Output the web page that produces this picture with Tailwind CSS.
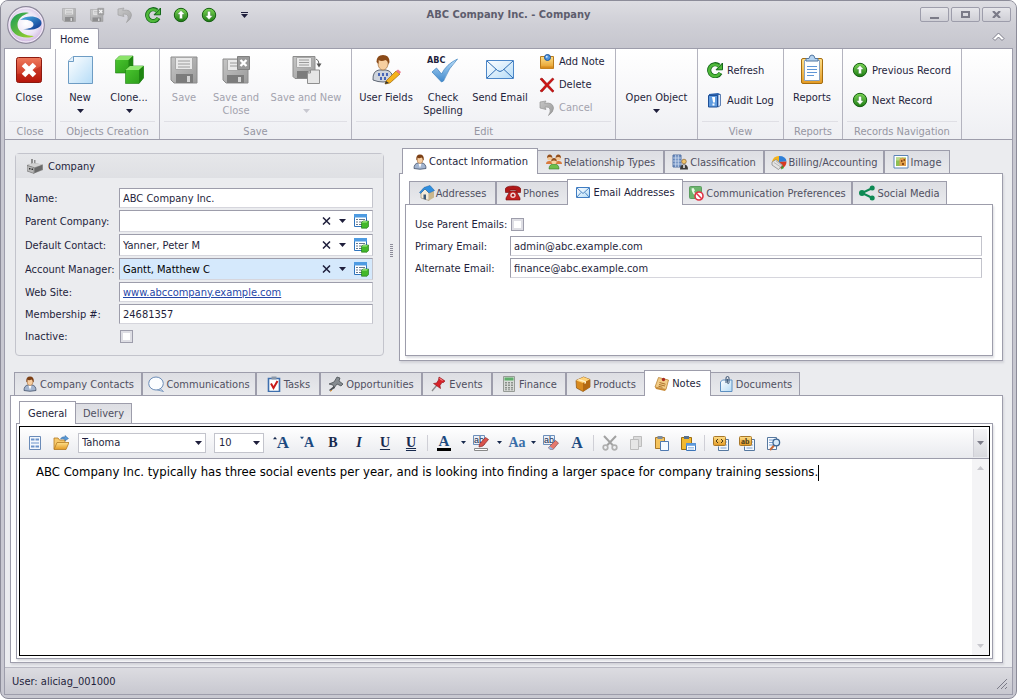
<!DOCTYPE html>
<html lang="en">
    <head>
        <meta charset="UTF-8" />
        <meta name="viewport" content="width=device-width, initial-scale=1.0" />
        <title>ABC Company Inc. - Company</title>
        <script src="https://cdn.jsdelivr.net/npm/@tailwindcss/browser@4"></script>
    </head>
    <body class="bg-white">
        <!-- icon sprite -->
        <svg class="absolute w-0 h-0" aria-hidden="true">
            <defs>
                <linearGradient id="gGreen" x1="0" y1="0" x2="0" y2="1">
                    <stop offset="0" stop-color="#7ed957" />
                    <stop offset="1" stop-color="#1c7a12" />
                </linearGradient>
                <linearGradient id="gRed" x1="0" y1="0" x2="0" y2="1">
                    <stop offset="0" stop-color="#ef7a5c" />
                    <stop offset="1" stop-color="#bf1a0e" />
                </linearGradient>
                <linearGradient id="gGray" x1="0" y1="0" x2="1" y2="1">
                    <stop offset="0" stop-color="#c6c6c6" />
                    <stop offset="1" stop-color="#9a9a9a" />
                </linearGradient>
                <linearGradient id="gBlue" x1="0" y1="0" x2="1" y2="1">
                    <stop offset="0" stop-color="#ffffff" />
                    <stop offset="1" stop-color="#b5dcf7" />
                </linearGradient>
                <linearGradient id="gSky" x1="0" y1="0" x2="0" y2="1">
                    <stop offset="0" stop-color="#b9defa" />
                    <stop offset="1" stop-color="#3f88cc" />
                </linearGradient>
                <linearGradient id="gGold" x1="0" y1="0" x2="0" y2="1">
                    <stop offset="0" stop-color="#ffe08a" />
                    <stop offset="1" stop-color="#e39a24" />
                </linearGradient>
                <linearGradient id="gCube" x1="0" y1="0" x2="1" y2="1">
                    <stop offset="0" stop-color="#4cc930" />
                    <stop offset="1" stop-color="#2a9a18" />
                </linearGradient>
                <radialGradient id="gOrb" cx="0.5" cy="0.45" r="0.55">
                    <stop offset="0" stop-color="#ffffff" />
                    <stop offset="0.6" stop-color="#ebe3f5" />
                    <stop offset="1" stop-color="#cdb2dc" />
                </radialGradient>
                <linearGradient id="gSwooshG" x1="0" y1="0" x2="1" y2="1">
                    <stop offset="0" stop-color="#149a5b" />
                    <stop offset="1" stop-color="#a6d626" />
                </linearGradient>
                <linearGradient id="gSwooshB" x1="0" y1="0" x2="1" y2="1">
                    <stop offset="0" stop-color="#4fb4e6" />
                    <stop offset="1" stop-color="#0b2f8c" />
                </linearGradient>
            </defs>

            <symbol id="i-orb" viewBox="0 0 38 38">
                <circle cx="19" cy="19" r="18.3" fill="url(#gOrb)" stroke="#8d8a9b" stroke-width="1.2" />
                <circle cx="19" cy="19" r="17" fill="none" stroke="#f6f2fa" stroke-width="1" />
                <path d="M22 7C12 5 3.500 11 3.500 19c0 7 7 12.500 16.500 12.500 3 0 5-.5 7-1.500-9 0-16.500-4.500-16.500-11C10.500 13 15 9 22 7z" fill="url(#gSwooshG)" />
                <path d="M13 14c7-6 21.500-4 21.500 3 0 5-8 8-18.500 6 6 0 10.500-1.500 10.500-4.500 0-3.500-6-5.500-13.500-4.500z" fill="url(#gSwooshB)" />
            </symbol>

            <symbol id="i-save" viewBox="0 0 32 32">
                <path d="M3 3h26v26H6l-3-3z" fill="url(#gGray)" stroke="#8c8c8c" />
                <path d="M7.500 3.500h17v12h-17z" fill="#e9e9e9" stroke="#a8a8a8" />
                <path d="M10 7h12M10 10h12M10 13h12" stroke="#9a9a9a" />
                <path d="M8 20h17v9H8z" fill="#7c7c7c" />
                <path d="M19 22h3v6h-3z" fill="#d6d6d6" />
            </symbol>
            <symbol id="i-save-close" viewBox="0 0 32 32">
                <path d="M3 5h25v24H6l-3-3z" fill="url(#gGray)" stroke="#8c8c8c" />
                <path d="M7.500 5.500h13v11h-13z" fill="#e9e9e9" stroke="#a8a8a8" />
                <path d="M10 9h9M10 12h9" stroke="#9a9a9a" />
                <path d="M7 21h17v8H7z" fill="#7c7c7c" />
                <path d="M18 23h3v5h-3z" fill="#d6d6d6" />
                <path d="M17.500 2.500h12v13h-12z" fill="#999" stroke="#808080" />
                <path d="M20.500 6l6 6M26.500 6l-6 6" stroke="#fff" stroke-width="2.400" />
            </symbol>
            <symbol id="i-save-new" viewBox="0 0 32 32">
                <path d="M3 2.500h22v22H5l-2-2z" fill="url(#gGray)" stroke="#8c8c8c" />
                <path d="M6.500 3.500h15v10h-15z" fill="#e9e9e9" stroke="#a8a8a8" />
                <path d="M9 6h10M9 8.500h10M9 11h10" stroke="#9a9a9a" />
                <path d="M7 17h11v7H7z" fill="#7c7c7c" />
                <path d="M26 5q3 1 3 5" stroke="#666" fill="none" />
                <path d="M26.500 9.500h5l-2.500 4z" fill="#555" />
                <path d="M20.500 16h9v13.500h-12V19z" fill="#e6e6e6" stroke="#8f8f8f" />
                <path d="M17.500 19h3v-3" fill="none" stroke="#8f8f8f" />
            </symbol>
            <symbol id="i-undo" viewBox="0 0 16 16">
                <path d="M1 2l6-1-1.300 2.300Q14 2 14.500 8q0 4-5 7.500 2.500-4 1.500-6.500Q10 6.500 6 7l1 2.500L1 8z" fill="url(#gGray)" stroke="#959595" stroke-width=".7" />
            </symbol>
            <symbol id="i-refresh" viewBox="0 0 16 16">
                <path d="M13.500 11A6 6 0 1 1 12 3.500" fill="none" stroke="#14691a" stroke-width="4.200" />
                <path d="M9 7.800h6.500V1z" fill="#14691a" stroke="#14691a" />
                <path d="M13 11.200A5.800 5.800 0 1 1 12 4.200" fill="none" stroke="#4fb83a" stroke-width="2.600" />
                <path d="M10.500 7.300H15V2.500z" fill="#4fb83a" />
            </symbol>
            <symbol id="i-up" viewBox="0 0 16 16">
                <circle cx="8" cy="8" r="6.700" fill="url(#gGreen)" stroke="#155d12" />
                <path d="M8 3.300l4 4.200H9.600v4.300H6.400V7.500H4z" fill="#fff" stroke="#2a7a20" stroke-width=".5" />
            </symbol>
            <symbol id="i-down" viewBox="0 0 16 16">
                <circle cx="8" cy="8" r="6.700" fill="url(#gGreen)" stroke="#155d12" />
                <path d="M8 12.700l4-4.200H9.600V4.200H6.400v4.300H4z" fill="#fff" stroke="#2a7a20" stroke-width=".5" />
            </symbol>
            <symbol id="i-caret" viewBox="0 0 7 4"><path d="M0 0h7L3.500 4z" fill="currentColor" /></symbol>

            <symbol id="i-close" viewBox="0 0 32 32">
                <rect x="3.500" y="3.500" width="25" height="25" rx="2" fill="url(#gRed)" stroke="#8c1a10" />
                <path d="M4 20q14-1 24-8v16H4z" fill="#a80f06" opacity=".35" />
                <path d="M10.500 10.500l11 11M21.500 10.500l-11 11" stroke="#fff" stroke-width="5" />
            </symbol>
            <symbol id="i-new" viewBox="0 0 32 32">
                <path d="M9 2.500h19.500v27h-24V7z" fill="url(#gBlue)" stroke="#6d9cc4" />
                <path d="M9.500 2.500v5h-5" fill="#e6f3fd" stroke="#6d9cc4" />
            </symbol>
            <symbol id="i-clone" viewBox="0 0 32 32">
                <path d="M2.500 6l4-4H20v11l-4.500 6h-13z" fill="url(#gCube)" stroke="#1c7c10" stroke-width=".6" />
                <path d="M2.500 6l4-4H20l-4.500 4z" fill="#8be36a" />
                <path d="M15.500 6L20 2v12l-4.500 5z" fill="#1f8512" />
                <path d="M12.500 16l4.500-4h13.500v12L26 29.500H12.500z" fill="url(#gCube)" stroke="#1c7c10" stroke-width=".6" />
                <path d="M12.500 16l4.500-4h13.500L26 16z" fill="#93e873" />
                <path d="M26 16l4.500-4v12L26 29.500z" fill="#1f8512" />
            </symbol>
            <symbol id="i-user-fields" viewBox="0 0 32 32">
                <path d="M3 26q-.5-9 6-10h7q7 1 7 10-10 4-20 0z" fill="#cfd4dc" stroke="#5f6774" />
                <path d="M8 19h2v3H8zM12 19h2v3h-2zM16 19h2v3h-2zM10 23h2v3h-2zM14 23h2v3h-2z" fill="#4866b8" />
                <ellipse cx="13" cy="9.500" rx="5" ry="6.500" fill="#f7cfa0" stroke="#a5713d" stroke-width=".7" />
                <path d="M6.500 8q0-7 6.500-7t6.500 7l-1 3q0-4-3-5-4 2-7 0v4z" fill="#8a4a18" />
                <path d="M16 27l10-10 4 3-10 9-5 1z" fill="#f6b21c" stroke="#a06a10" stroke-width=".7" />
                <path d="M26 17l2-1.500 3 2.500-1.500 2z" fill="#e9788a" />
                <path d="M15 30l1-3 3 2z" fill="#333" />
            </symbol>
            <symbol id="i-check" viewBox="0 0 32 32">
                <path d="M5 18l4.500-4 5 6q5-10 16-15-9 9-14 22l-2 1z" fill="url(#gSky)" stroke="#3b7fbd" stroke-width=".7" />
            </symbol>
            <symbol id="i-mail" viewBox="0 0 32 22">
                <path d="M2.500 1.500h27v18h-27z" fill="url(#gBlue)" stroke="#4b86c8" />
                <path d="M3 2l10.500 9.500q2.500 2 5 0L29 2M3 19l9-8.500M29 19l-9-8.500" fill="none" stroke="#2f6eb4" />
            </symbol>
            <symbol id="i-mail-sm" viewBox="0 0 16 12">
                <path d="M1.500.5h13v10h-13z" fill="url(#gBlue)" stroke="#3f7cc2" />
                <path d="M2 1l6 5.500L14 1M2 10l4-4.500M14 10l-4-4.500" fill="none" stroke="#2f6eb4" stroke-width=".8" />
            </symbol>
            <symbol id="i-note" viewBox="0 0 16 16">
                <path d="M1.500 2.500h13v12h-13z" fill="url(#gGold)" stroke="#b97a1c" />
                <path d="M2 12.500h12v2H2z" fill="#d88c1e" />
                <circle cx="8.500" cy="3.500" r="3" fill="#4f93dc" stroke="#1e5499" />
                <circle cx="7.700" cy="2.700" r="1" fill="#d2e8ff" />
            </symbol>
            <symbol id="i-delete" viewBox="0 0 16 16">
                <path d="M1 2l2-1 5 5.500L13.500 1 15 2.200 9.500 8 15 14l-1.500 1.200L8 9.500 3 15l-2-1 5.500-6z" fill="#d11212" stroke="#8e0c0c" stroke-width=".6" />
            </symbol>
            <symbol id="i-audit" viewBox="0 0 16 16">
                <path d="M2 2l9-1 2 1v12H2z" fill="#2a61ae" />
                <path d="M1.500 3.500h9v11.500h-9z" fill="#5f9be0" stroke="#1f4f96" />
                <path d="M11 2.500h2.500v11L11 15z" fill="#dfeafa" stroke="#1f4f96" stroke-width=".7" />
                <path d="M5 5h3v5l-1 1-1-1zM5.500 11.500h2v2h-2z" fill="#fff" />
            </symbol>
            <symbol id="i-reports" viewBox="0 0 32 32">
                <rect x="5.500" y="4.500" width="21" height="25" rx="1.500" fill="url(#gGold)" stroke="#a56d10" />
                <path d="M8.500 6.500h15v20h-15z" fill="#fdfeff" stroke="#8aa3c0" />
                <path d="M11 12.500h10M11 15.500h10M11 18.500h10M11 21.500h7" stroke="#5e95d6" />
                <path d="M10 7V4.500h3Q13.500 1 16 1t3 3.500h3V7z" fill="#b3d2f0" stroke="#5276a0" />
            </symbol>

            <symbol id="i-factory" viewBox="0 0 16 16">
                <path d="M4 1h2v5H4zM7 2h1.500v5H7z" fill="#8d8d8d" />
                <path d="M0 7l6-2 10 1.500V12l-9 3.500L0 13z" fill="#8b8b8b" />
                <path d="M0 7l6-2 10 1.500-9 3z" fill="#d2d2d2" />
                <path d="M0 7.500l7 2v6L0 13z" fill="#b9b9b9" stroke="#666" stroke-width=".5" />
                <path d="M2 10h1.500v1.500H2zM4.500 10.500H6V12H4.500z" fill="#333" />
                <path d="M8 10l7-3v4.500L8 14.800z" fill="#6a6a6a" />
            </symbol>
            <symbol id="i-lookup" viewBox="0 0 16 16">
                <path d="M1.500 1.500h12v12h-12z" fill="#fff" stroke="#2f74bd" />
                <path d="M1 1h13v3.500H1z" fill="#4e9be2" />
                <path d="M3 6.500h2M6 6.500h6M3 9h2M6 9h5M3 11.500h2M6 11.500h3" stroke="#66788c" />
                <path d="M8.500 9.500l1.500-1.500h5.500v5.500l-1.500 1.700H8.500z" fill="#43b82a" stroke="#186f10" stroke-width=".6" />
                <path d="M8.800 9.600L10 8.300h5l-1.300 1.300z" fill="#a1ec85" />
            </symbol>
            <symbol id="i-user" viewBox="0 0 16 16">
                <path d="M2 14.500q0-5 4-5.500h4q4 .5 4 5.500-6 1.500-12 0z" fill="#a3b5d0" stroke="#44526a" stroke-width=".8" />
                <path d="M6.500 9.500h3L8 14z" fill="#fff" />
                <ellipse cx="8" cy="5.500" rx="3" ry="4" fill="#f6cda0" stroke="#9a6432" stroke-width=".5" />
                <path d="M4.300 5.500Q4 .5 8 .5t3.800 5l-.8 1Q11 4 9.500 3.500 7 5 5.300 3.500v3z" fill="#7c3f14" />
            </symbol>
            <symbol id="i-users" viewBox="0 0 16 16">
                <path d="M3 15q0-5 5-5t5 5z" fill="#6fbf4b" stroke="#37752a" stroke-width=".6" />
                <path d="M0 10q0-3 3.500-3T7 10zM9 10q0-3 3.500-3t3.500 3z" fill="#d97a3d" />
                <circle cx="3.700" cy="4" r="2.500" fill="#f5c795" />
                <circle cx="12.300" cy="4" r="2.500" fill="#f5c795" />
                <circle cx="8" cy="7.500" r="2.600" fill="#f8cf9e" />
                <path d="M1 4q0-3.500 2.700-3.500T6.400 4Q4 2 1 4zM9.600 4q0-3.500 2.700-3.500T15 4q-3-2-5.400 0zM5.200 7.500Q5.200 4 8 4t2.800 3.500Q8 5.500 5.200 7.500z" fill="#94501d" />
            </symbol>
            <symbol id="i-classify" viewBox="0 0 16 16">
                <path d="M1 1h8v12H1z" fill="#6d8fc2" stroke="#5675a5" />
                <path d="M1 4h8M1 7h8M1 10h8M3.700 1v12M6.300 1v12" stroke="#cfdcf0" stroke-width=".8" />
                <circle cx="12" cy="7.500" r="2.300" fill="#eec36a" stroke="#7b531c" stroke-width=".6" />
                <path d="M8 15.500q0-5 4-5t4 5z" fill="#3b3b3b" />
                <path d="M11.300 11h1.400v3h-1.400z" fill="#fff" />
            </symbol>
            <symbol id="i-billing" viewBox="0 0 16 16">
                <path d="M8 2q7 0 7.500 5.500L8 8z" fill="#2f7fd8" />
                <path d="M15.500 7.500q0 6-6 7L8 8z" fill="#d83a1f" />
                <path d="M1 8q1-6 7-6v6z" fill="#f5b31b" />
                <path d="M11 11l2 3-3 1.500z" fill="#3a9e2c" />
                <path d="M1 8l4-2.500 6.500 5.500-4 4.500L1 11z" fill="#e3e3e3" stroke="#7f7f7f" stroke-width=".7" />
                <path d="M3 8.500l6 4M5 7l5.500 4.500" stroke="#a5a5a5" stroke-width=".7" />
            </symbol>
            <symbol id="i-image" viewBox="0 0 16 16">
                <path d="M1 1.500h14v12.500H1z" fill="#fff" stroke="#5a83b7" />
                <path d="M3 3.500h10v8.500H3z" fill="#8fbf52" />
                <path d="M3 3.500h4v3H3z" fill="#b9d98a" />
                <path d="M6.500 12V5l3-1.500 3.500 1.500v7z" fill="#dfa04c" />
                <path d="M8 6h1.500v2H8zM10.500 5H12v2h-1.500zM9 9h2v2H9z" fill="#8a4a18" />
            </symbol>
            <symbol id="i-house" viewBox="0 0 16 16">
                <path d="M2 8l4-4 4 4v7.500L2 13z" fill="#f3ead8" stroke="#8f836a" stroke-width=".6" />
                <path d="M10 8l5-2v6.500l-5 3z" fill="#c9b78e" />
                <path d="M5 2.500L11 .5l4.500 5L10 8 6 4 1.500 8.500.5 7.500z" fill="#2f8fe0" stroke="#1a5c9c" stroke-width=".5" />
                <path d="M4.500 9.500h2.500v5.300L4.500 14z" fill="#3c5977" />
            </symbol>
            <symbol id="i-phone" viewBox="0 0 16 16">
                <path d="M0 5q0-4 8-4t8 4l-.5 2.500h-4L11 5H5L4.500 7.500h-4z" fill="#b01818" stroke="#6f0c0c" stroke-width=".6" />
                <path d="M5 6h6l4 7v2H1v-2z" fill="#c22020" stroke="#6f0c0c" stroke-width=".6" />
                <circle cx="8" cy="10.300" r="2.700" fill="#f1d4d4" />
                <circle cx="8" cy="10.300" r="1.200" fill="#a01212" />
            </symbol>
            <symbol id="i-comm-pref" viewBox="0 0 16 16">
                <rect x="1.500" y="1.500" width="12" height="12" rx="1" fill="#6cb56d" stroke="#5c9d60" />
                <path d="M3.500 3.500q0 6 6.500 8l1-2-2-1.500-1 .8Q6.500 8 6 6.500L7 5.500 5.500 3z" fill="#e9f7e6" />
                <circle cx="11" cy="11" r="4" fill="#fff" stroke="#e03345" stroke-width="1.600" />
                <path d="M8.300 8.300l5.400 5.400" stroke="#e03345" stroke-width="1.500" />
            </symbol>
            <symbol id="i-share" viewBox="0 0 16 16">
                <path d="M13.500 3L3 8l10.500 5" fill="none" stroke="#0e8a54" stroke-width="2" />
                <circle cx="13.200" cy="3" r="2.500" fill="#0e8a54" />
                <circle cx="3" cy="8" r="3" fill="#0e8a54" />
                <circle cx="13.200" cy="13" r="2.500" fill="#0e8a54" />
            </symbol>
            <symbol id="i-bubble" viewBox="0 0 16 16">
                <path d="M12 12.500l3.500 3-6-1.500z" fill="#dfeaf8" stroke="#6c8db8" stroke-width=".8" />
                <ellipse cx="8" cy="7.500" rx="7.300" ry="6.500" fill="#fbfdff" stroke="#6c8db8" />
            </symbol>
            <symbol id="i-task" viewBox="0 0 16 16">
                <path d="M2.500 2.500h11v13h-11z" fill="#fff" stroke="#3e6fae" stroke-width="1.600" />
                <path d="M5.500.5h5v3h-5z" fill="#8b98a8" />
                <path d="M5 7.500l2.500 4.500L11.500 5" fill="none" stroke="#c91a1a" stroke-width="2" />
            </symbol>
            <symbol id="i-tap" viewBox="0 0 16 16">
                <path d="M9 1l3 1-1 3 4 3-2 2-4-2-3 4-1-3-4-1 5-2z" fill="#858b90" stroke="#3d4347" stroke-width=".7" />
                <path d="M1 14l5-4 1 2-5 3z" fill="#4a4f54" />
                <path d="M2 15.300l2-1" stroke="#d58f34" />
            </symbol>
            <symbol id="i-pin" viewBox="0 0 16 16">
                <path d="M1 15l5-6" stroke="#8a8a8a" stroke-width="1.300" />
                <path d="M8 1l6 4-1.500 1.500L11 6.500 9 9.500l.5 3L2.500 7.500 5.500 7 7.500 4z" fill="#d8232a" stroke="#8f1015" stroke-width=".6" />
                <path d="M8.500 2.500l3 2" stroke="#ff9a9a" />
            </symbol>
            <symbol id="i-calc" viewBox="0 0 16 16">
                <path d="M2.500.5h11v15h-11z" fill="#d8dbd8" stroke="#969b96" />
                <path d="M3.500 1.500h9v3h-9z" fill="#5fae6b" />
                <path d="M4 6h2v1.500H4zM7 6h2v1.500H7zM10 6h2v1.500h-2zM4 8.500h2V10H4zM7 8.500h2V10H7zM10 8.500h2V10h-2zM4 11h2v1.500H4zM7 11h2v1.500H7zM10 11h2v1.500h-2zM4 13.300h2v1H4zM7 13.300h2v1H7zM10 13.300h2v1h-2z" fill="#8a908a" />
            </symbol>
            <symbol id="i-box" viewBox="0 0 16 16">
                <path d="M1 4.500L8.500 1 15 3.500V11l-7 4.500L1.500 12z" fill="#d98b1f" stroke="#8d5410" stroke-width=".7" />
                <path d="M1 4.500L8.500 1 15 3.500 8 7z" fill="#ffd37a" />
                <path d="M8 7l7-3.500V11l-7 4.500z" fill="#b46a12" />
                <path d="M4 3l7 2.300v2L9.500 8V6.200L3 4z" fill="#fff0c4" />
            </symbol>
            <symbol id="i-notes" viewBox="0 0 16 16">
                <path d="M4.500 1.500l10 2.500-2.500 9.500L1 11z" fill="#f2cc86" stroke="#b98436" stroke-width=".8" />
                <path d="M5.500 6.500l6 1.700M5 8.500l6 1.500M4.500 10.300l4 1" stroke="#9a5c14" stroke-width=".8" />
                <path d="M1 11l11 2.500-1 1.500-9-2z" fill="#c98a35" />
                <circle cx="9.500" cy="3.500" r="1.700" fill="#a92a22" />
            </symbol>
            <symbol id="i-docs" viewBox="0 0 16 16">
                <path d="M4.500 4H14v11.500H2.500V6z" fill="url(#gBlue)" stroke="#5d8fc0" />
                <path d="M8 7V2q0-1.500 1.500-1.500T11 2v4.500q0 1-.8 1t-.8-1V3" fill="none" stroke="#3c5572" />
            </symbol>

            <symbol id="i-form" viewBox="0 0 16 16">
                <path d="M2.500 1.500h11v13h-11z" fill="#f4f8fd" stroke="#6a8bb8" />
                <path d="M4 4.500h3.500M8.500 4.500H12M4 11.500h3.500M8.500 11.500H12" stroke="#6d94ca" stroke-width="2" />
                <path d="M4 8h8" stroke="#6d94ca" />
            </symbol>
            <symbol id="i-open" viewBox="0 0 16 16">
                <path d="M1 14V3h4l1.500 2H12v2" fill="#f7c96b" stroke="#b37a22" stroke-width=".8" />
                <path d="M1 14.500l3-7h12l-3 7z" fill="url(#gGold)" stroke="#b37a22" stroke-width=".8" />
                <path d="M7.500 4Q9 1 12 2V.5L15.500 3.500 12 5.800V4.300Q9.500 3.500 7.500 4z" fill="#5b9bd8" stroke="#2d659e" stroke-width=".5" />
            </symbol>
            <symbol id="i-cut" viewBox="0 0 16 16">
                <path d="M2 1l9 9.500M14 1L5 10.500" stroke="#a2a2a2" stroke-width="2" />
                <circle cx="3.500" cy="12.500" r="2.300" fill="none" stroke="#b0b0b0" stroke-width="1.700" />
                <circle cx="12.500" cy="12.500" r="2.300" fill="none" stroke="#b0b0b0" stroke-width="1.700" />
            </symbol>
            <symbol id="i-copy" viewBox="0 0 16 16">
                <path d="M5.500 1.500h8v10h-8z" fill="#dcdcdc" stroke="#bdbdbd" />
                <path d="M2.500 4.500h8v10h-8z" fill="#e6e6e6" stroke="#bdbdbd" />
            </symbol>
            <symbol id="i-paste" viewBox="0 0 16 16">
                <path d="M1.500 2.500h9v11h-9z" fill="#f5c45e" stroke="#a8782a" />
                <path d="M3.500 1h5v3h-5z" fill="#7d8da0" />
                <path d="M6.500 6.500h8v9h-8z" fill="#f6faff" stroke="#4f79b0" />
            </symbol>
            <symbol id="i-paste-special" viewBox="0 0 16 16">
                <path d="M1.500 2.500h10v12h-10z" fill="#f2b92e" stroke="#9a6e14" />
                <path d="M4 1h5v3H4z" fill="#56708c" />
                <path d="M6.500 8.500h9v7h-9z" fill="#fff" stroke="#3d75b8" />
                <path d="M6.500 8.500h9v2h-9zM8 12.500h6M8 14h6" fill="#5f9bdc" stroke="#5f9bdc" stroke-width=".6" />
            </symbol>
            <symbol id="i-field" viewBox="0 0 16 16">
                <path d="M8.500 4.500h7v11h-10v-4" fill="#f4f8fd" stroke="#56789f" />
                <path d="M11 7h3M11 10h3M7.500 13h6" stroke="#7aa0d0" />
                <rect x=".5" y="1.500" width="12" height="9" rx="1" fill="url(#gGold)" stroke="#a8782a" />
            </symbol>
            <symbol id="i-find" viewBox="0 0 16 16">
                <path d="M2.500 2.500h9v12h-9z" fill="#f8fbff" stroke="#56789f" />
                <path d="M4 5h5M4 7.500h4M4 10h4" stroke="#7aa0d0" />
                <path d="M9 10.500L5 15" stroke="#c96a3a" stroke-width="2" />
                <circle cx="11.300" cy="7.500" r="3.300" fill="#d8ebfb" stroke="#3c6593" stroke-width="1.300" />
            </symbol>
        </svg>

        <div class="h-screen flex flex-col overflow-hidden rounded-lg border border-[#8c8c99] bg-[#c8c8d1] font-['DejaVu_Sans_Condensed',Tahoma,sans-serif] text-[11px] leading-[13px] text-[#1f1f3c] whitespace-nowrap">
            <!-- title bar -->
            <header class="grid grid-cols-[1fr_auto_1fr] h-[47px] shrink-0 bg-linear-to-b from-[#dddde2] via-[#cfcfd6] to-[#c6c6ce]">
                <div class="flex pl-[6px]">
                    <button aria-label="Application menu" class="self-center shrink-0"><svg class="size-[38px]"><use href="#i-orb" /></svg></button>
                    <div class="ml-[5px] flex flex-col">
                        <div class="h-[27px] pl-[11px] flex items-center gap-3">
                            <button aria-label="Save" disabled class="opacity-80"><svg class="size-4"><use href="#i-save" /></svg></button>
                            <button aria-label="Save and Close" disabled class="opacity-80"><svg class="size-4"><use href="#i-save-close" /></svg></button>
                            <button aria-label="Undo" disabled class="opacity-80"><svg class="size-4"><use href="#i-undo" /></svg></button>
                            <button aria-label="Refresh"><svg class="size-4"><use href="#i-refresh" /></svg></button>
                            <button aria-label="Previous Record"><svg class="size-4"><use href="#i-up" /></svg></button>
                            <button aria-label="Next Record"><svg class="size-4"><use href="#i-down" /></svg></button>
                            <button aria-label="Customize toolbar" class="ml-3 flex flex-col items-center gap-px">
                                <span class="w-[7px] h-px bg-[#1f1f3c]"></span>
                                <svg class="w-[7px] h-1"><use href="#i-caret" /></svg>
                            </button>
                        </div>
                        <button class="relative z-10 -mb-px flex-1 self-start w-[49px] rounded-t-xs border border-b-0 border-[#9d9dab] bg-white">Home</button>
                    </div>
                </div>
                <h1 class="h-[27px] leading-[27px] font-bold text-[#5d5d6d]">ABC Company Inc. - Company</h1>
                <div class="flex flex-col items-end pr-[5px]">
                    <div class="h-[27px] flex items-center gap-0.5">
                        <button aria-label="Minimize" class="w-[29px] h-[15px] flex justify-center items-end pb-0.5 rounded-xs border border-[#9d9dab] bg-linear-to-b from-[#e6e6ea] to-[#cfcfd6]"><svg class="w-[9px] h-[7px]" viewBox="0 0 9 7"><path d="M0 5h9v2H0z" fill="#7b7b88" /></svg></button>
                        <button aria-label="Maximize" class="w-[29px] h-[15px] flex justify-center items-center rounded-xs border border-[#9d9dab] bg-linear-to-b from-[#e6e6ea] to-[#cfcfd6]"><svg class="w-[9px] h-[7px]" viewBox="0 0 9 7"><path d="M1 1h7v5H1z" fill="none" stroke="#7b7b88" stroke-width="2" /></svg></button>
                        <button aria-label="Close window" class="w-[29px] h-[15px] flex justify-center items-center rounded-xs border border-[#9d9dab] bg-linear-to-b from-[#e6e6ea] to-[#cfcfd6]"><svg class="w-[9px] h-[7px]" viewBox="0 0 9 7"><path d="M1 0l7 7M8 0L1 7" stroke="#7b7b88" stroke-width="2.200" /></svg></button>
                    </div>
                    <button aria-label="Collapse ribbon" class="mt-1 mr-[6px]"><svg class="w-[13px] h-[10px]" viewBox="0 0 13 10"><path d="M1 6.500L6.500 1 12 6.500 10 8.500 6.500 5 3 8.500z" fill="#fff" stroke="#7b7b88" /></svg></button>
                </div>
            </header>

            <div class="mx-[3px] mb-[3px] flex-1 min-h-0 flex flex-col border border-[#9d9dab] bg-[#ebecef]">
                <!-- ribbon -->
                <nav class="flex h-[91px] shrink-0 border-b border-[#9d9dab] bg-linear-to-b from-white via-[#f7f7f9] to-[#eeeff3]">
                    <section class="w-[51px] shrink-0 flex flex-col border-r border-[#b4b4bf]">
                        <div class="flex-1 pt-[5px]">
                            <button class="w-full pr-0.5 flex flex-col items-center gap-[5px]"><svg class="size-8"><use href="#i-close" /></svg>Close</button>
                        </div>
                        <h2 class="mx-1 h-[18px] border-t border-[#dfdfe5] leading-[19px] text-center text-[#9696a2]">Close</h2>
                    </section>
                    <section class="w-[104px] shrink-0 flex flex-col border-r border-[#b4b4bf]">
                        <div class="flex-1 pt-[5px] flex items-start">
                            <button class="w-12 flex flex-col items-center gap-[5px]"><svg class="size-8"><use href="#i-new" /></svg>New<svg class="w-[7px] h-1"><use href="#i-caret" /></svg></button>
                            <button class="w-[50px] flex flex-col items-center gap-[5px]"><svg class="size-8"><use href="#i-clone" /></svg>Clone...<svg class="w-[7px] h-1"><use href="#i-caret" /></svg></button>
                        </div>
                        <h2 class="mx-1 h-[18px] border-t border-[#dfdfe5] leading-[19px] text-center text-[#9696a2]">Objects Creation</h2>
                    </section>
                    <section class="w-[192px] shrink-0 flex flex-col border-r border-[#b4b4bf]">
                        <div class="flex-1 pt-[5px] flex items-start text-[#a3a3ae]">
                            <button disabled class="w-12 flex flex-col items-center gap-[5px]"><svg class="size-8"><use href="#i-save" /></svg>Save</button>
                            <button disabled class="w-14 flex flex-col items-center gap-[5px]"><svg class="size-8"><use href="#i-save-close" /></svg><span>Save and<br />Close</span></button>
                            <button disabled class="w-[84px] flex flex-col items-center gap-[5px]"><svg class="size-8"><use href="#i-save-new" /></svg>Save and New<svg class="w-[7px] h-1 text-[#c8c8d0]"><use href="#i-caret" /></svg></button>
                        </div>
                        <h2 class="mx-1 h-[18px] border-t border-[#dfdfe5] leading-[19px] text-center text-[#9696a2]">Save</h2>
                    </section>
                    <section class="w-[264px] shrink-0 flex flex-col border-r border-[#b4b4bf]">
                        <div class="flex-1 flex items-start">
                            <button class="w-[68px] pt-[5px] flex flex-col items-center gap-[5px]"><svg class="size-8"><use href="#i-user-fields" /></svg>User Fields</button>
                            <button class="w-12 pt-[5px] pr-0.5 flex flex-col items-center gap-[5px]">
                                <span class="relative"><svg class="size-8"><use href="#i-check" /></svg><b class="absolute top-0 left-0 text-[9px]">ABC</b></span>
                                <span>Check<br />Spelling</span>
                            </button>
                            <button class="w-16 pt-[5px] flex flex-col items-center gap-[5px]"><span class="h-8 flex items-center"><svg class="w-8 h-[22px]"><use href="#i-mail" /></svg></span>Send Email</button>
                            <div class="pt-px pl-[7px] flex flex-col">
                                <button class="h-[23px] flex items-center gap-1"><svg class="size-4"><use href="#i-note" /></svg>Add Note</button>
                                <button class="h-[23px] flex items-center gap-1"><svg class="size-4"><use href="#i-delete" /></svg>Delete</button>
                                <button disabled class="h-[23px] flex items-center gap-1 text-[#a3a3ae]"><svg class="size-4"><use href="#i-undo" /></svg>Cancel</button>
                            </div>
                        </div>
                        <h2 class="mx-1 h-[18px] border-t border-[#dfdfe5] leading-[19px] text-center text-[#9696a2]">Edit</h2>
                    </section>
                    <section class="w-[82px] shrink-0 pt-[42px] border-r border-[#b4b4bf]">
                        <button class="w-full flex flex-col items-center gap-[5px]">Open Object<svg class="w-[7px] h-1"><use href="#i-caret" /></svg></button>
                    </section>
                    <section class="w-[86px] shrink-0 flex flex-col border-r border-[#b4b4bf]">
                        <div class="flex-1 pt-[6px] pl-[9px] flex flex-col items-start">
                            <button class="h-[30px] flex items-center gap-1"><svg class="size-4"><use href="#i-refresh" /></svg>Refresh</button>
                            <button class="h-[30px] flex items-center gap-1"><svg class="size-4"><use href="#i-audit" /></svg>Audit Log</button>
                        </div>
                        <h2 class="mx-1 h-[18px] border-t border-[#dfdfe5] leading-[19px] text-center text-[#9696a2]">View</h2>
                    </section>
                    <section class="w-[59px] shrink-0 flex flex-col border-r border-[#b4b4bf]">
                        <div class="flex-1 pt-[5px]">
                            <button class="w-full pr-0.5 flex flex-col items-center gap-[5px]"><svg class="size-8"><use href="#i-reports" /></svg>Reports</button>
                        </div>
                        <h2 class="mx-1 h-[18px] border-t border-[#dfdfe5] leading-[19px] text-center text-[#9696a2]">Reports</h2>
                    </section>
                    <section class="w-[119px] shrink-0 flex flex-col border-r border-[#b4b4bf]">
                        <div class="flex-1 pt-[6px] pl-[9px] flex flex-col items-start">
                            <button class="h-[30px] flex items-center gap-1"><svg class="size-4"><use href="#i-up" /></svg>Previous Record</button>
                            <button class="h-[30px] flex items-center gap-1"><svg class="size-4"><use href="#i-down" /></svg>Next Record</button>
                        </div>
                        <h2 class="mx-1 h-[18px] border-t border-[#dfdfe5] leading-[19px] text-center text-[#9696a2]">Records Navigation</h2>
                    </section>
                </nav>

                <div class="flex shrink-0 pl-[10px] pr-[9px]">
                    <!-- company form -->
                    <section class="mt-[13px] mb-[5px] w-[369px] shrink-0 rounded-sm border border-[#c3c4cc]">
                        <h2 class="h-6 pl-[11px] flex items-center gap-[5px] bg-linear-to-b from-[#e6e7ea] to-[#dfe0e4]"><svg class="size-4"><use href="#i-factory" /></svg>Company</h2>
                        <form class="grid grid-cols-[94px_1fr] gap-y-0.5 pl-[9px] pr-[10px] pt-[10px] pb-[9px] items-center">
                            <label for="name">Name:</label>
                            <input id="name" type="text" value="ABC Company Inc." class="h-5 min-w-0 px-[3px] border border-[#9d9dab] border-r-[#c3c4cc] border-b-[#d6d6dd] bg-white" />

                            <label for="parent">Parent Company:</label>
                            <div class="h-[22px] flex items-center border border-[#9d9dab] border-r-[#c3c4cc] border-b-[#d6d6dd] bg-white">
                                <input id="parent" type="text" class="flex-1 min-w-0 px-[3px]" />
                                <button type="button" aria-label="Clear" class="w-4 flex justify-center"><svg class="w-[9px] h-2" viewBox="0 0 9 8"><path d="M1 .5l7 7M8 .5l-7 7" stroke="#1f1f3c" stroke-width="1.500" /></svg></button>
                                <button type="button" aria-label="Drop down" class="w-4 flex justify-center"><svg class="w-[7px] h-1"><use href="#i-caret" /></svg></button>
                                <button type="button" aria-label="Find" class="w-[22px] flex justify-center"><svg class="size-4"><use href="#i-lookup" /></svg></button>
                            </div>

                            <label for="contact">Default Contact:</label>
                            <div class="h-[22px] flex items-center border border-[#9d9dab] border-r-[#c3c4cc] border-b-[#d6d6dd] bg-white">
                                <input id="contact" type="text" value="Yanner, Peter M" class="flex-1 min-w-0 px-[3px]" />
                                <button type="button" aria-label="Clear" class="w-4 flex justify-center"><svg class="w-[9px] h-2" viewBox="0 0 9 8"><path d="M1 .5l7 7M8 .5l-7 7" stroke="#1f1f3c" stroke-width="1.500" /></svg></button>
                                <button type="button" aria-label="Drop down" class="w-4 flex justify-center"><svg class="w-[7px] h-1"><use href="#i-caret" /></svg></button>
                                <button type="button" aria-label="Find" class="w-[22px] flex justify-center"><svg class="size-4"><use href="#i-lookup" /></svg></button>
                            </div>

                            <label for="manager">Account Manager:</label>
                            <div class="h-[22px] flex items-center border border-[#9d9dab] border-r-[#c3c4cc] border-b-[#d6d6dd] bg-[#d5e9fc]">
                                <input id="manager" type="text" value="Gantt, Matthew C" class="flex-1 min-w-0 px-[3px] text-black" />
                                <button type="button" aria-label="Clear" class="w-4 flex justify-center"><svg class="w-[9px] h-2" viewBox="0 0 9 8"><path d="M1 .5l7 7M8 .5l-7 7" stroke="#1f1f3c" stroke-width="1.500" /></svg></button>
                                <button type="button" aria-label="Drop down" class="w-4 flex justify-center"><svg class="w-[7px] h-1"><use href="#i-caret" /></svg></button>
                                <button type="button" aria-label="Find" class="w-[22px] flex justify-center"><svg class="size-4"><use href="#i-lookup" /></svg></button>
                            </div>

                            <span>Web Site:</span>
                            <div class="h-5 px-[3px] flex items-center border border-[#9d9dab] border-r-[#c3c4cc] border-b-[#d6d6dd] bg-white"><a href="http://www.abccompany.example.com" class="text-[#2546a8] underline">www.abccompany.example.com</a></div>

                            <label for="member">Membership #:</label>
                            <input id="member" type="text" value="24681357" class="h-5 min-w-0 px-[3px] border border-[#9d9dab] border-r-[#c3c4cc] border-b-[#d6d6dd] bg-white" />

                            <label for="inactive">Inactive:</label>
                            <div class="h-5 pl-px flex items-center"><input id="inactive" type="checkbox" class="size-[13px] appearance-none border border-[#9d9dab] bg-white shadow-[inset_0_0_0_2px_#dedee4]" /></div>
                        </form>
                    </section>

                    <!-- splitter -->
                    <div class="w-[15px] shrink-0 flex justify-center items-center cursor-col-resize">
                        <div class="w-[3px] h-[14px] bg-[repeating-linear-gradient(#8c8c99_0_1px,transparent_1px_2px)]"></div>
                    </div>

                    <!-- contact tabs -->
                    <section class="flex-1 min-w-0 mt-2 flex flex-col">
                        <div role="tablist" class="h-[25px] pl-[3px] flex items-end text-[#505061]">
                            <button role="tab" aria-selected="true" class="relative z-10 w-[136px] h-[26px] -mb-px flex justify-center items-center gap-px border border-b-0 border-[#9d9dab] bg-white text-[#1f1f3c]"><svg class="size-4"><use href="#i-user" /></svg>Contact Information</button>
                            <button role="tab" class="w-[126px] h-[23px] flex justify-center items-center gap-0.5 border border-l-0 border-b-0 border-[#9d9dab] bg-linear-to-b from-[#dddee3] to-[#e9eaed]"><svg class="size-4"><use href="#i-users" /></svg>Relationship Types</button>
                            <button role="tab" class="w-[100px] h-[23px] flex justify-center items-center gap-0.5 border border-b-0 border-[#9d9dab] bg-linear-to-b from-[#dddee3] to-[#e9eaed]"><svg class="size-4"><use href="#i-classify" /></svg>Classification</button>
                            <button role="tab" class="w-[120px] h-[23px] flex justify-center items-center gap-0.5 border border-b-0 border-[#9d9dab] bg-linear-to-b from-[#dddee3] to-[#e9eaed]"><svg class="size-4"><use href="#i-billing" /></svg>Billing/Accounting</button>
                            <button role="tab" class="w-[66px] h-[23px] flex justify-center items-center gap-0.5 border border-b-0 border-[#9d9dab] bg-linear-to-b from-[#dddee3] to-[#e9eaed]"><svg class="size-4"><use href="#i-image" /></svg>Image</button>
                        </div>
                        <div class="flex-1 flex flex-col pt-[5px] pl-[5px] pr-[9px] pb-1 border border-[#9d9dab] bg-white shadow-[1px_2px_2px_#d2d3d9]">
                            <div role="tablist" class="h-[25px] pl-1 flex items-end text-[#505061]">
                                <button role="tab" class="w-[87px] h-[23px] flex justify-center items-center gap-px border border-b-0 border-[#9d9dab] bg-linear-to-b from-[#dddee3] to-[#e9eaed]"><svg class="size-4"><use href="#i-house" /></svg>Addresses</button>
                                <button role="tab" class="w-[71px] h-[23px] flex justify-center items-center gap-0.5 border border-r-0 border-b-0 border-[#9d9dab] bg-linear-to-b from-[#dddee3] to-[#e9eaed]"><svg class="size-4"><use href="#i-phone" /></svg>Phones</button>
                                <button role="tab" aria-selected="true" class="relative z-10 w-[116px] h-[26px] -mb-px flex justify-center items-center gap-0.5 border border-b-0 border-[#9d9dab] bg-white text-[#1f1f3c]"><svg class="w-4 h-3"><use href="#i-mail-sm" /></svg>Email Addresses</button>
                                <button role="tab" class="w-[169px] h-[23px] flex justify-center items-center gap-0.5 border border-l-0 border-b-0 border-[#9d9dab] bg-linear-to-b from-[#dddee3] to-[#e9eaed]"><svg class="size-4"><use href="#i-comm-pref" /></svg>Communication Preferences</button>
                                <button role="tab" class="w-[95px] h-[23px] flex justify-center items-center gap-0.5 border border-b-0 border-[#9d9dab] bg-linear-to-b from-[#dddee3] to-[#e9eaed]"><svg class="size-4"><use href="#i-share" /></svg>Social Media</button>
                            </div>
                            <form class="flex-1 grid grid-cols-[95px_1fr] gap-y-0.5 content-start items-center pt-[9px] pl-[9px] pr-[10px] border border-[#9d9dab] bg-white shadow-[1px_2px_2px_#dcdde2]">
                                <label for="useParent">Use Parent Emails:</label>
                                <div class="h-5 pl-px flex items-center"><input id="useParent" type="checkbox" class="size-[13px] appearance-none border border-[#9d9dab] bg-white shadow-[inset_0_0_0_2px_#dedee4]" /></div>
                                <label for="primary">Primary Email:</label>
                                <input id="primary" type="email" value="admin@abc.example.com" class="h-5 min-w-0 px-[3px] border border-[#9d9dab] border-r-[#c3c4cc] border-b-[#d6d6dd] bg-white" />
                                <label for="alternate">Alternate Email:</label>
                                <input id="alternate" type="email" value="finance@abc.example.com" class="h-5 min-w-0 px-[3px] border border-[#9d9dab] border-r-[#c3c4cc] border-b-[#d6d6dd] bg-white" />
                            </form>
                        </div>
                    </section>
                </div>

                <!-- record tabs -->
                <section class="flex-1 min-h-0 flex flex-col pt-[9px] pl-[5px] pr-[9px] pb-1">
                    <div role="tablist" class="h-[25px] shrink-0 pl-1 flex items-end text-[#505061]">
                        <button role="tab" class="w-32 h-[23px] flex justify-center items-center gap-0.5 border border-b-0 border-[#9d9dab] bg-linear-to-b from-[#dddee3] to-[#e9eaed]"><svg class="size-4"><use href="#i-user" /></svg>Company Contacts</button>
                        <button role="tab" class="w-[114px] h-[23px] flex justify-center items-center gap-0.5 border border-b-0 border-[#9d9dab] bg-linear-to-b from-[#dddee3] to-[#e9eaed]"><svg class="size-4"><use href="#i-bubble" /></svg>Communications</button>
                        <button role="tab" class="w-16 h-[23px] flex justify-center items-center gap-0.5 border border-b-0 border-[#9d9dab] bg-linear-to-b from-[#dddee3] to-[#e9eaed]"><svg class="size-4"><use href="#i-task" /></svg>Tasks</button>
                        <button role="tab" class="w-[102px] h-[23px] flex justify-center items-center gap-0.5 border border-b-0 border-[#9d9dab] bg-linear-to-b from-[#dddee3] to-[#e9eaed]"><svg class="size-4"><use href="#i-tap" /></svg>Opportunities</button>
                        <button role="tab" class="w-[70px] h-[23px] flex justify-center items-center gap-0.5 border border-b-0 border-[#9d9dab] bg-linear-to-b from-[#dddee3] to-[#e9eaed]"><svg class="size-4"><use href="#i-pin" /></svg>Events</button>
                        <button role="tab" class="w-[74px] h-[23px] flex justify-center items-center gap-0.5 border border-b-0 border-[#9d9dab] bg-linear-to-b from-[#dddee3] to-[#e9eaed]"><svg class="size-4"><use href="#i-calc" /></svg>Finance</button>
                        <button role="tab" class="w-[78px] h-[23px] flex justify-center items-center gap-0.5 border border-r-0 border-b-0 border-[#9d9dab] bg-linear-to-b from-[#dddee3] to-[#e9eaed]"><svg class="size-4"><use href="#i-box" /></svg>Products</button>
                        <button role="tab" aria-selected="true" class="relative z-10 w-[67px] h-[26px] -mb-px flex justify-center items-center gap-0.5 border border-b-0 border-[#9d9dab] bg-white text-[#1f1f3c]"><svg class="size-4"><use href="#i-notes" /></svg>Notes</button>
                        <button role="tab" class="w-[89px] h-[23px] flex justify-center items-center gap-0.5 border border-l-0 border-b-0 border-[#9d9dab] bg-linear-to-b from-[#dddee3] to-[#e9eaed]"><svg class="size-4"><use href="#i-docs" /></svg>Documents</button>
                    </div>
                    <div class="flex-1 min-h-0 flex flex-col pt-[5px] pl-[5px] pr-[9px] pb-[3px] border border-[#9d9dab] bg-white shadow-[1px_2px_2px_#d2d3d9]">
                        <div role="tablist" class="h-[22px] shrink-0 pl-[3px] flex items-end text-[#505061]">
                            <button role="tab" aria-selected="true" class="relative z-10 w-[57px] h-[23px] -mb-px border border-b-0 border-[#9d9dab] bg-white text-[#1f1f3c]">General</button>
                            <button role="tab" class="w-14 h-5 border border-l-0 border-b-0 border-[#9d9dab] bg-linear-to-b from-[#dddee3] to-[#e9eaed]">Delivery</button>
                        </div>
                        <div class="flex-1 min-h-0 p-0.5 flex border border-[#9d9dab] shadow-[1px_2px_2px_#dcdde2]">
                            <div class="flex-1 min-w-0 flex flex-col border border-black">
                                <div role="toolbar" aria-label="Formatting" class="h-8 shrink-0 pl-0.5 flex items-center border-b border-[#9d9dab] bg-linear-to-b from-white to-[#e9eaee] font-['Liberation_Serif',serif] font-bold text-[#17294d]">
                                    <button aria-label="Form view" class="w-[26px] flex justify-center"><svg class="size-4"><use href="#i-form" /></svg></button>
                                    <button aria-label="Open" class="w-[26px] flex justify-center"><svg class="size-4"><use href="#i-open" /></svg></button>
                                    <div class="relative ml-1 w-32 h-5 font-['DejaVu_Sans_Condensed',Tahoma,sans-serif] font-normal text-[#1f1f3c]">
                                        <select aria-label="Font" class="w-full h-full px-[3px] appearance-none border border-[#c3c4cc] bg-white"><option>Tahoma</option></select>
                                        <svg class="absolute right-1 top-2 w-[7px] h-1 pointer-events-none"><use href="#i-caret" /></svg>
                                    </div>
                                    <div class="relative ml-2 w-[50px] h-5 font-['DejaVu_Sans_Condensed',Tahoma,sans-serif] font-normal text-[#1f1f3c]">
                                        <select aria-label="Font size" class="w-full h-full px-1 appearance-none border border-[#c3c4cc] bg-white"><option>10</option></select>
                                        <svg class="absolute right-1 top-2 w-[7px] h-1 pointer-events-none"><use href="#i-caret" /></svg>
                                    </div>
                                    <button aria-label="Grow font" class="ml-1 w-[26px] flex justify-center text-[17px] leading-4 text-[#1d4a80]"><svg class="mt-px w-1 h-1" viewBox="0 0 7 4"><path d="M0 4h7L3.500 0z" fill="#17294d" /></svg>A</button>
                                    <button aria-label="Shrink font" class="w-[26px] flex justify-center text-[14px] leading-4 text-[#1d4a80]"><svg class="mt-px w-1 h-1"><use href="#i-caret" /></svg>A</button>
                                    <button aria-label="Bold" class="w-[26px] text-[14px] leading-4">B</button>
                                    <button aria-label="Italic" class="w-[26px] text-[14px] leading-4 italic">I</button>
                                    <button aria-label="Underline" class="w-[26px] text-[14px] leading-4 underline underline-offset-2">U</button>
                                    <button aria-label="Double underline" class="w-[26px] text-[14px] leading-4 underline decoration-double underline-offset-1">U</button>
                                    <span class="mx-[3px] w-px h-4 bg-[#cfcfd6]"></span>
                                    <button aria-label="Font color" class="w-[26px] flex flex-col items-center text-[15px] leading-[13px] text-[#1d4a80]">A<span class="w-[14px] h-[3px] bg-black"></span></button>
                                    <button aria-label="Font color options" class="w-3 flex justify-center"><svg class="w-[5px] h-[3px]"><use href="#i-caret" /></svg></button>
                                    <button aria-label="Highlight" class="w-6 flex justify-center">
                                        <svg class="size-4" viewBox="0 0 16 16">
                                            <path d="M.5.500h11v9H.5z" fill="#eaf1fa" stroke="#6d8fba" />
                                            <text x="1" y="8" font-size="9" font-family="Liberation Sans" font-weight="400" fill="#17294d">ab</text>
                                            <path d="M6.500 9l6-6.500 3 2-5.500 6.500-4 1z" fill="#d9544d" stroke="#8d2b2b" stroke-width=".7" />
                                            <path d="M1.500 13.500h13v2h-13z" fill="#fff" stroke="#888" />
                                        </svg>
                                    </button>
                                    <button aria-label="Highlight options" class="w-3 flex justify-center"><svg class="w-[5px] h-[3px]"><use href="#i-caret" /></svg></button>
                                    <button aria-label="Change case" class="w-6 text-[14px] leading-4 text-[#3a6ea8]">Aa</button>
                                    <button aria-label="Case options" class="w-[9px] flex justify-center"><svg class="w-[5px] h-[3px]"><use href="#i-caret" /></svg></button>
                                    <button aria-label="Clear formatting" class="w-[26px] flex justify-center">
                                        <svg class="size-4" viewBox="0 0 16 16">
                                            <path d="M.5.500h11v9H.5z" fill="#eaf1fa" stroke="#6d8fba" />
                                            <text x="1" y="8" font-size="9" font-family="Liberation Sans" font-weight="400" fill="#17294d">ab</text>
                                            <path d="M6.500 11.500l6-6L15.500 8l-5.500 6.500H7.500l-2-1.500z" fill="#e6796d" stroke="#8a4a4a" stroke-width=".7" />
                                            <path d="M6.700 11.300l3.800 3-.5.300H7.500l-2-1.700z" fill="#8fb9ea" />
                                        </svg>
                                    </button>
                                    <button aria-label="Font dialog" class="w-[26px] text-[16px] leading-4 text-[#1d4a80]">A</button>
                                    <span class="mx-[3px] w-px h-4 bg-[#cfcfd6]"></span>
                                    <button aria-label="Cut" disabled class="w-[26px] flex justify-center"><svg class="size-4"><use href="#i-cut" /></svg></button>
                                    <button aria-label="Copy" disabled class="w-[26px] flex justify-center"><svg class="size-4"><use href="#i-copy" /></svg></button>
                                    <button aria-label="Paste" class="w-[26px] flex justify-center"><svg class="size-4"><use href="#i-paste" /></svg></button>
                                    <button aria-label="Paste special" class="w-[26px] flex justify-center"><svg class="size-4"><use href="#i-paste-special" /></svg></button>
                                    <span class="mx-[3px] w-px h-4 bg-[#cfcfd6]"></span>
                                    <button aria-label="Insert field" class="w-[26px] flex justify-center"><svg class="size-4"><use href="#i-field" /><path d="M5 4L3 6l2 2M8 4l2 2-2 2" fill="none" stroke="#4a3a18" /></svg></button>
                                    <button aria-label="Insert text field" class="w-[26px] flex justify-center"><svg class="size-4"><use href="#i-field" /><text x="2" y="9" font-size="8" fill="#4a3a18">ab</text></svg></button>
                                    <button aria-label="Find" class="w-[26px] flex justify-center"><svg class="size-4"><use href="#i-find" /></svg></button>
                                    <button aria-label="More" class="ml-auto mr-0.5 w-[14px] h-7 flex justify-center items-center border-l border-[#cfcfd6] bg-linear-to-b from-[#f4f4f6] to-[#d8d9de] text-[#7b7b88]"><svg class="w-[7px] h-1"><use href="#i-caret" /></svg></button>
                                </div>
                                <div class="flex-1 min-h-0 flex bg-white">
                                    <div contenteditable="true" role="textbox" aria-label="Notes" aria-multiline="true" class="flex-1 min-w-0 overflow-hidden pt-[5px] pl-4 text-[13px] leading-4 text-black outline-none">ABC Company Inc. typically has three social events per year, and is looking into finding a larger space for company training sessions.<span class="inline-block align-middle w-px h-4 bg-black"></span></div>
                                    <div class="w-[17px] shrink-0 py-[7px] flex flex-col justify-between items-center bg-[#f4f4f6] text-[#c8c8ce]">
                                        <button aria-label="Scroll up"><svg class="w-[7px] h-1 rotate-180"><use href="#i-caret" /></svg></button>
                                        <button aria-label="Scroll down"><svg class="w-[7px] h-1"><use href="#i-caret" /></svg></button>
                                    </div>
                                </div>
                            </div>
                        </div>
                    </div>
                </section>

                <!-- status bar -->
                <footer class="h-[27px] shrink-0 pl-[7px] pr-1 flex items-center justify-between border-t border-[#b9b9c3] bg-linear-to-b from-[#dcdce1] to-[#c8c8d0]">
                    <span>User: aliciag_001000</span>
                    <svg class="self-end mb-1 w-3 h-3" viewBox="0 0 12 12"><path d="M1 11L11 1M5 11l6-6M9 11l2-2" stroke="#7b7b88" /></svg>
                </footer>
            </div>
        </div>
    </body>
</html>
